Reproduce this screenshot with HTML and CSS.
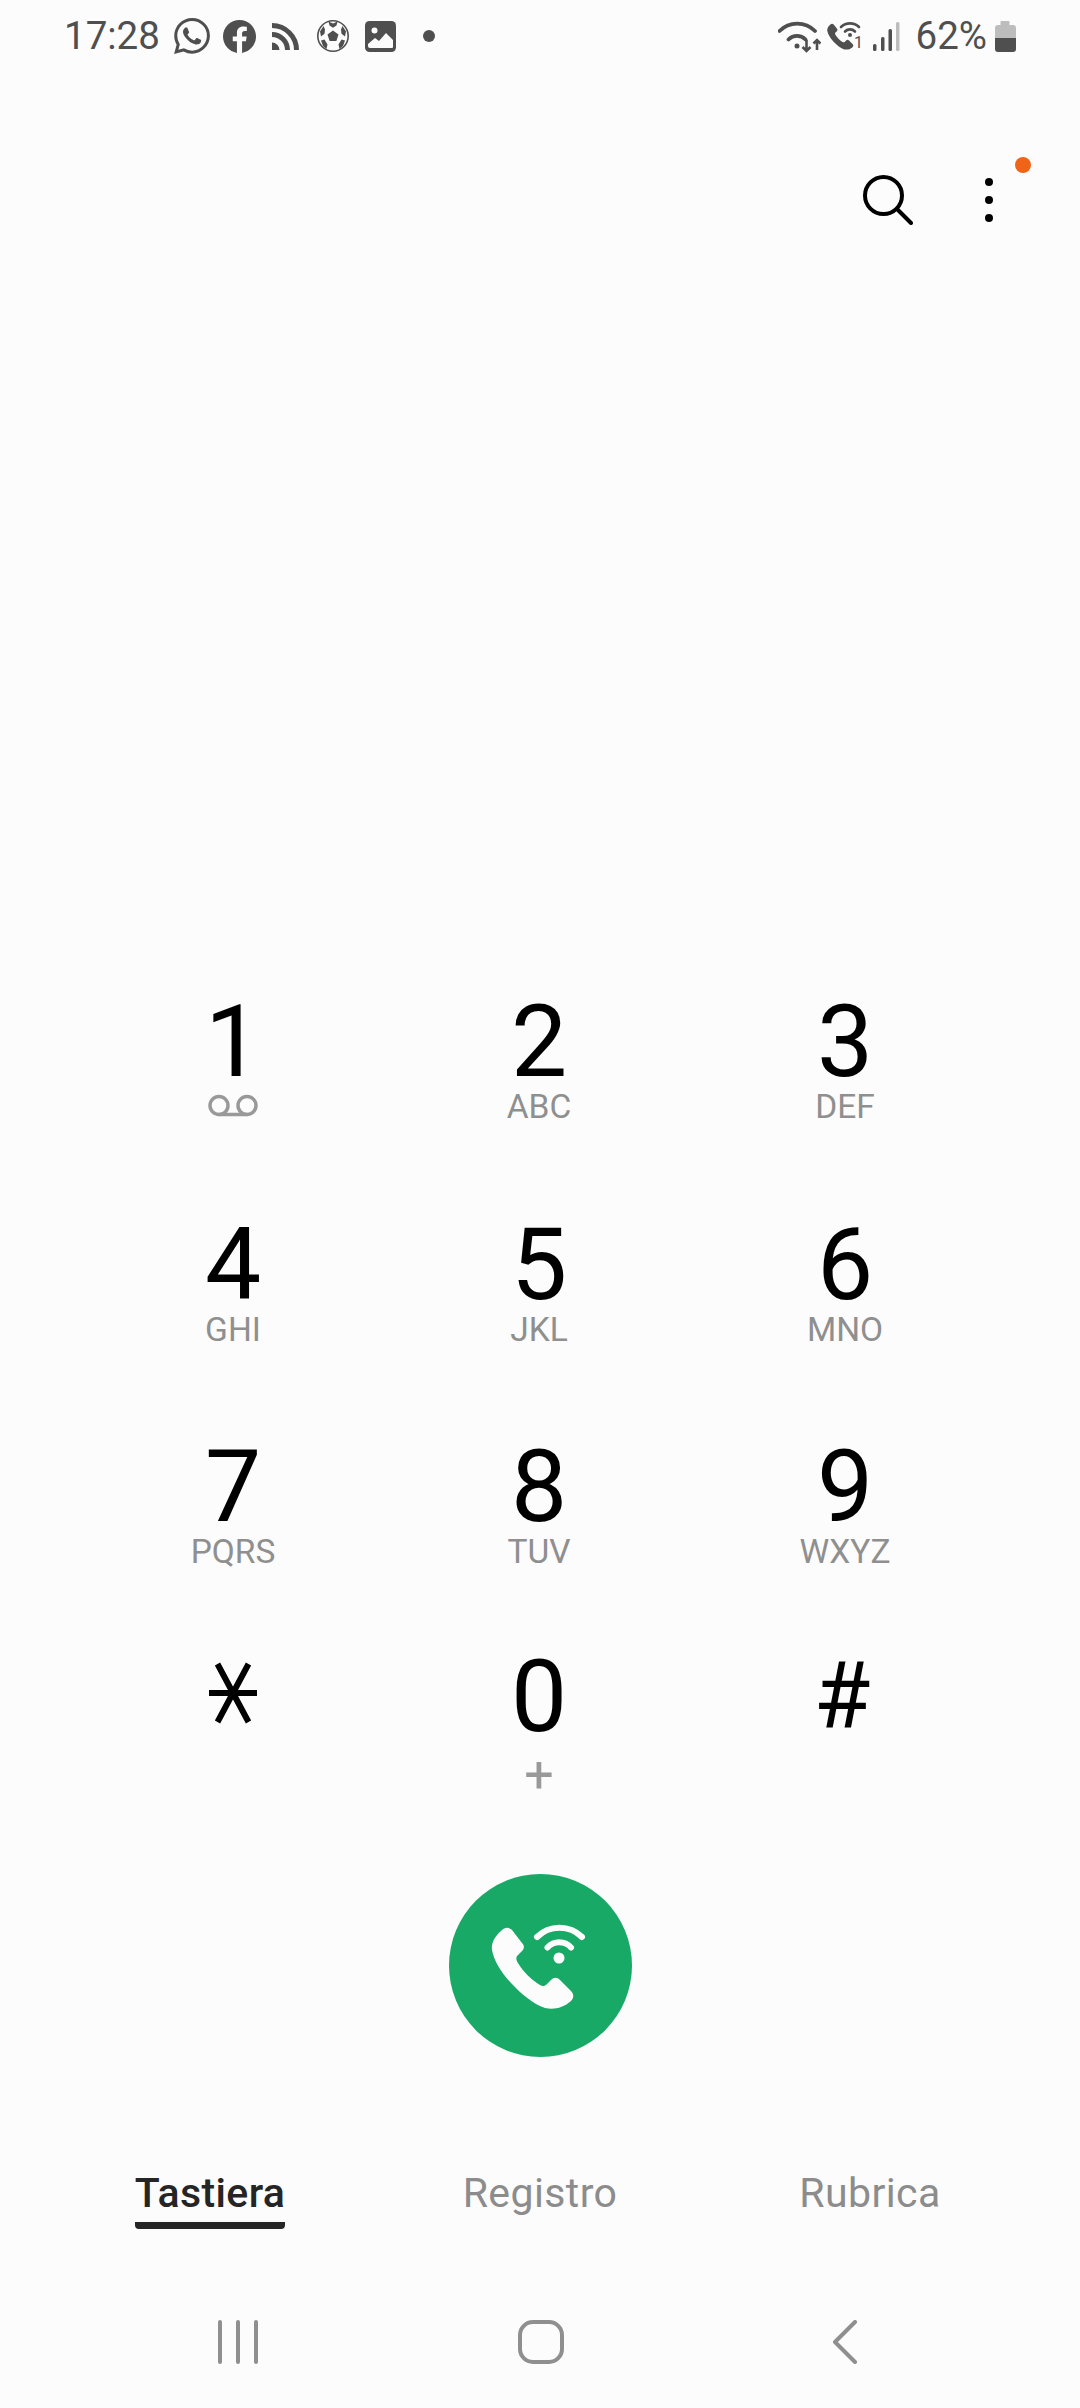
FILE: index.html
```html
<!DOCTYPE html>
<html lang="it">
<head>
<meta charset="UTF-8">
<title>Telefono</title>
<link rel="stylesheet" href="styles.css">
</head>
<body>

<div class="phone">

<!-- Barra di stato -->
<div class="status">
    <span class="status-text">17:28</span>
    <svg class="ic-wa" viewBox="0 0 24 24"><path d="M17.472 14.382c-.297-.149-1.758-.867-2.03-.967-.273-.099-.471-.148-.67.15-.197.297-.767.966-.94 1.164-.173.199-.347.223-.644.075-.297-.15-1.255-.463-2.39-1.475-.883-.788-1.48-1.761-1.653-2.059-.173-.297-.018-.458.13-.606.134-.133.298-.347.446-.52.149-.174.198-.298.298-.497.099-.198.05-.371-.025-.52-.075-.149-.669-1.612-.916-2.207-.242-.579-.487-.5-.669-.51-.173-.008-.371-.01-.57-.01-.198 0-.52.074-.792.372-.272.297-1.04 1.016-1.04 2.479 0 1.462 1.065 2.875 1.213 3.074.149.198 2.096 3.2 5.077 4.487.709.306 1.262.489 1.694.625.712.227 1.36.195 1.871.118.571-.085 1.758-.719 2.006-1.413.248-.694.248-1.289.173-1.413-.074-.124-.272-.198-.57-.347m-5.421 7.403h-.004a9.87 9.87 0 01-5.031-1.378l-.361-.214-3.741.982.998-3.648-.235-.374a9.86 9.86 0 01-1.51-5.26c.001-5.45 4.436-9.884 9.888-9.884 2.64 0 5.122 1.03 6.988 2.898a9.825 9.825 0 012.893 6.994c-.003 5.45-4.437 9.884-9.885 9.884m8.413-18.297A11.815 11.815 0 0012.05 0C5.495 0 .16 5.335.157 11.892c0 2.096.547 4.142 1.588 5.945L.057 24l6.305-1.654a11.882 11.882 0 005.683 1.448h.005c6.554 0 11.89-5.335 11.893-11.893a11.821 11.821 0 00-3.48-8.413z"/></svg>
    <svg class="ic-fb" viewBox="0 0 24 24"><path d="M24 12.073c0-6.627-5.373-12-12-12s-12 5.373-12 12c0 5.99 4.388 10.954 10.125 11.854v-8.385H7.078v-3.47h3.047V9.43c0-3.007 1.792-4.669 4.533-4.669 1.312 0 2.686.235 2.686.235v2.953H15.83c-1.491 0-1.956.925-1.956 1.874v2.25h3.328l-.532 3.47h-2.796v8.385C19.612 23.027 24 18.062 24 12.073z"/></svg>
    <svg class="ic-rss" viewBox="0 0 28 27"><path d="M0 2.5A24.5 24.5 0 0 1 24.500 27M0 11.500A15.500 15.500 0 0 1 15.500 27" class="line" stroke-width="5"/><path d="M0 19.500A7.500 7.500 0 0 1 7.500 27H0Z"/></svg>
    <svg class="ic-ball" viewBox="0 0 32 32">
        <circle cx="16" cy="16" r="15.200" class="line" stroke-width="1.600"/>
        <path d="M16 10.500l5.500 4-2.100 6.500h-6.800l-2.100-6.500zM11.500 1.500L16 3.500l4.500-2-1 4-3.500 2.200L12.500 5.500zM25.500 6l3.500 5.500-1 5-3.500-2.800-.5-4.200zM6.500 6l1.500 3.500-.5 4.200-3.500 2.800-1-5zM4 20.500l3.500-1 3 5-1 4.500-3.500-3zM28 20.500l-2 5.500-3.500 3-1-4.500 3-5z"/>
    </svg>
    <svg class="ic-img" viewBox="0 0 31 31">
        <rect width="31" height="31" rx="4.500"/>
        <circle cx="9.500" cy="9.500" r="3" fill="#fcfcfc"/>
        <path d="M3 23l7-6 4 3 7-8 7 7v7a1 1 0 0 1-1 1H5a2 2 0 0 1-2-2z" fill="#fcfcfc"/>
    </svg>
    <span class="status-dot"></span>

    <svg class="ic-wifi" viewBox="0 0 43 33">
        <path d="M1.500 11A25 25 0 0 1 37 11M10.500 19.500A12 12 0 0 1 27.500 19.500" class="line round" stroke-width="3.800"/>
        <circle cx="19" cy="26" r="2.500"/>
        <path d="M28.500 20v11M24.500 27l4 4 4-4M39 30V20M35.500 23.500l3.500-3.500 3.500 3.500" class="line" stroke-width="2.600"/>
    </svg>
    <svg class="ic-callwifi" viewBox="0 0 36 30">
        <path transform="translate(-13.500 -14.500) scale(.32)" d="M52 57C56 53 60 53 63 56L73 69C76 72 75 75 73 77L68 82C67 84 67 86 69 89C74 98 83 106 91 111C94 113 96 112 98 110L102 106C105 103 108 103 111 106L122 117C125 120 125 124 122 127C114 134 105 136 96 134C86 131 72 120 62 109C52 98 45 87 43 76C42 69 46 62 52 57Z"/>
        <path d="M14 6A13 13 0 0 1 32 6M18 10.500A7 7 0 0 1 28 10.500" class="line round" stroke-width="2.600"/>
        <circle cx="23" cy="14" r="2"/>
        <text x="27" y="27" class="ic-num">1</text>
    </svg>
    <svg class="ic-signal" viewBox="0 0 27 29">
        <rect x="0" y="22" width="3.500" height="7" rx="1.500"/>
        <rect x="8" y="15" width="3.500" height="14" rx="1.500"/>
        <rect x="15.500" y="7" width="3.500" height="22" rx="1.500"/>
        <rect x="23" y="0" width="3.500" height="29" rx="1.500" fill="#bdbdbd"/>
    </svg>
    <span class="status-text pct">62%</span>
    <svg class="ic-batt" viewBox="0 0 21 31">
        <path d="M5.500 1a1 1 0 0 1 1-1h7a1 1 0 0 1 1 1v3h3.500a3 3 0 0 1 3 3v11H0V7a3 3 0 0 1 3-3h2.500z" fill="#bdbdbd"/>
        <path d="M0 17h21v11a3 3 0 0 1-3 3H3a3 3 0 0 1-3-3z"/>
    </svg>
</div>

<!-- Azioni in alto -->
<div class="toolbar">
    <svg class="ic-search" viewBox="0 0 50 50">
        <circle cx="20.500" cy="20.500" r="18.500" fill="none" stroke="#000" stroke-width="4"/>
        <path d="M34 34l14 14" fill="none" stroke="#000" stroke-width="4" stroke-linecap="round"/>
    </svg>
    <div class="more">
        <span></span><span></span><span></span>
        <i class="badge"></i>
    </div>
</div>

<!-- Tastierino -->
<div class="keypad">
    <div class="key"><div class="digit">1</div>
        <svg class="ic-vm" viewBox="0 0 50 24"><circle cx="11" cy="11.500" r="9" /><circle cx="39" cy="11.500" r="9"/><path d="M11 20.500h28"/></svg>
    </div>
    <div class="key"><div class="digit">2</div><div class="sub">ABC</div></div>
    <div class="key"><div class="digit">3</div><div class="sub">DEF</div></div>
    <div class="key"><div class="digit">4</div><div class="sub">GHI</div></div>
    <div class="key"><div class="digit">5</div><div class="sub">JKL</div></div>
    <div class="key"><div class="digit">6</div><div class="sub">MNO</div></div>
    <div class="key"><div class="digit">7</div><div class="sub">PQRS</div></div>
    <div class="key"><div class="digit">8</div><div class="sub">TUV</div></div>
    <div class="key"><div class="digit">9</div><div class="sub">WXYZ</div></div>
    <div class="key">
        <svg class="ic-star" viewBox="0 0 50 62"><path d="M1 31h48M9.500 2l31 58M40.500 2l-31 58"/></svg>
    </div>
    <div class="key"><div class="digit">0</div><div class="plus">+</div></div>
    <div class="key"><div class="digit hash">#</div></div>
</div>

<!-- Chiamata -->
<div class="call">
    <svg viewBox="0 0 183 183">
        <path d="M52 57C56 53 60 53 63 56L73 69C76 72 75 75 73 77L68 82C67 84 67 86 69 89C74 98 83 106 91 111C94 113 96 112 98 110L102 106C105 103 108 103 111 106L122 117C125 120 125 124 122 127C114 134 105 136 96 134C86 131 72 120 62 109C52 98 45 87 43 76C42 69 46 62 52 57Z" fill="#fcfcfc"/>
        <path d="M88 63A32 32 0 0 1 133 63M98.500 73.500A16 16 0 0 1 122 73.500" fill="none" stroke="#fcfcfc" stroke-width="6" stroke-linecap="round"/>
        <circle cx="110" cy="84" r="5.500" fill="#fcfcfc"/>
    </svg>
</div>

<!-- Schede -->
<div class="tabs">
    <div class="tab active">Tastiera</div>
    <div class="tab">Registro</div>
    <div class="tab">Rubrica</div>
</div>

<!-- Navigazione -->
<div class="nav">
    <svg class="ic-bars" viewBox="0 0 40 44"><path d="M2 2v40M20 2v40M38 2v40"/></svg>
    <svg class="ic-home" viewBox="0 0 46 44"><rect x="2" y="2" width="42" height="40" rx="13"/></svg>
    <svg class="ic-back" viewBox="0 0 26 44"><path d="M23 2L3 22l20 20"/></svg>
</div>

</div>

</body>
</html>
```

FILE: styles.css
```css
body {margin:0;background:#fcfcfc;font-family:Roboto,"Liberation Sans",sans-serif;}
svg {display:block;flex:none;}
.phone {width:1080px;height:2408px;display:flex;flex-direction:column;background:#fcfcfc;overflow:hidden;}

.status {height:72px;padding:0 64px;display:flex;align-items:center;gap:16px;color:#4f4f4f;fill:#4f4f4f;flex:none;}
.status-text {font-size:38.5px;line-height:48px;}
.line {fill:none;stroke:#4f4f4f;}
.round {stroke-linecap:round;}
.ic-num {font-size:16px;font-family:Roboto,sans-serif;}
.ic-wa {width:36px;height:36px;margin-left:-2px;}
.ic-fb {width:33px;height:33px;margin-left:-3px;}
.ic-rss {width:28px;height:27px;}
.ic-ball {width:32px;height:32px;margin-left:1px;}
.ic-img {width:31px;height:31px;}
.status-dot {width:12px;height:12px;border-radius:50%;background:#4f4f4f;margin-left:11px;}
.ic-wifi {width:43px;height:33px;margin-left:auto;}
.ic-callwifi {width:36px;height:30px;margin-left:-10px;}
.ic-signal {width:27px;height:29px;margin-left:-6px;}
.ic-batt {width:21px;height:31px;margin-left:-8px;}

.toolbar {display:flex;justify-content:flex-end;align-items:center;gap:72px;padding:103px 87px 0 0;flex:none;}
.ic-search {width:50px;height:50px;}
.more {position:relative;width:8px;display:flex;flex-direction:column;gap:10px;}
.more span {width:8px;height:8px;border-radius:50%;background:#000;}
.badge {position:absolute;left:30px;top:-21px;width:16px;height:16px;border-radius:50%;background:#f06418;}

.keypad {margin-top:auto;padding:0 82px 0 80px;display:grid;grid-template-columns:repeat(3,306px);grid-template-rows:223px 222px 210px auto;flex:none;}
.key {display:flex;flex-direction:column;align-items:center;}
.digit {font-size:100px;line-height:100px;font-weight:380;color:#000;height:100px;}
.hash {font-size:92px;margin-right:6px;}
.sub {font-size:33.5px;line-height:36px;margin-top:-3px;color:#8f8f8f;}
.plus {font-size:52px;line-height:52px;margin-top:2px;color:#999;}
.ic-vm {width:50px;height:24px;margin-top:2px;fill:none;stroke:#999;stroke-width:3.5;}
.ic-star {width:50px;height:62px;margin-top:15px;fill:none;stroke:#000;stroke-width:6;}

.call {width:183px;height:183px;border-radius:50%;background:#18a966;margin:73px auto 0;flex:none;}
.tabs {display:grid;grid-template-columns:repeat(3,330px);padding:0 45px;margin-top:112px;justify-items:center;flex:none;}
.tab {font-size:41px;letter-spacing:.4px;line-height:48px;height:60px;color:#8c8c8c;box-sizing:border-box;}
.tab.active {color:#252525;font-weight:500;border-bottom:7px solid #252525;border-radius:0 0 4px 4px;padding-bottom:5px;}

.nav {display:grid;grid-template-columns:repeat(3,303.5px);padding:0 0 44px 86px;margin-top:91px;justify-items:center;flex:none;}
.nav svg {fill:none;stroke:#8f8f8f;stroke-width:4;stroke-linecap:round;stroke-linejoin:round;}
.ic-bars {width:40px;height:44px;}
.ic-home {width:46px;height:44px;}
.ic-back {width:26px;height:44px;}
```
